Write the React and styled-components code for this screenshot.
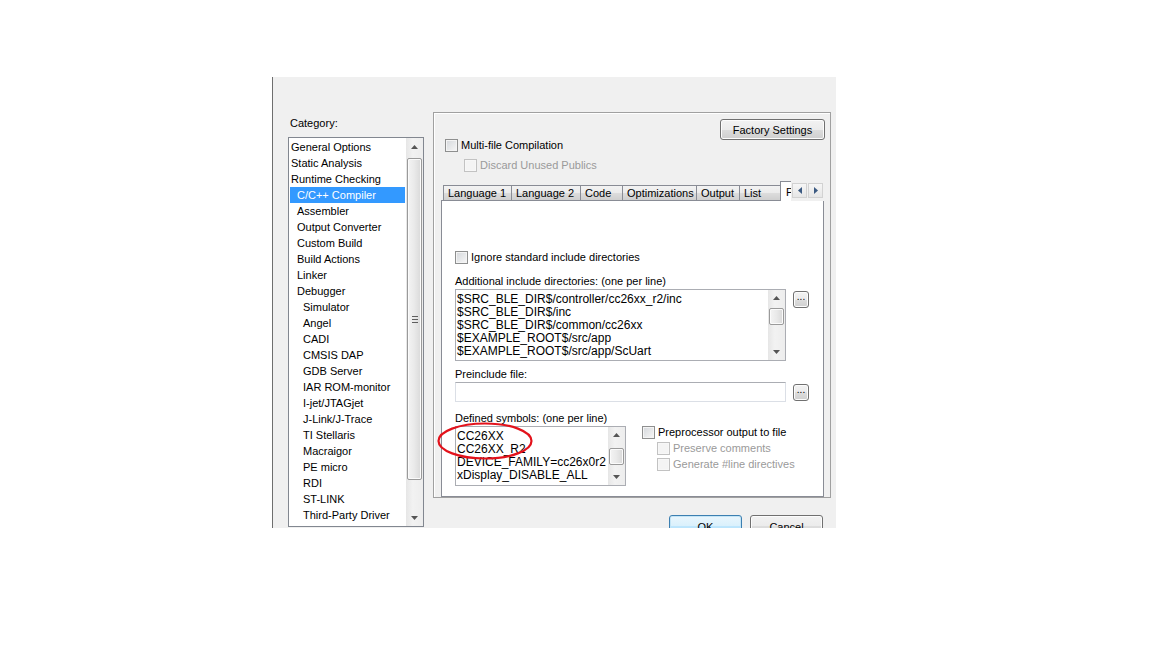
import React from 'react'
import styled, { createGlobalStyle } from 'styled-components'

const GlobalStyle = createGlobalStyle`
  html, body { margin: 0; padding: 0; background: #fff; }
  body {
    font-family: "Liberation Sans", Arial, sans-serif;
    font-size: 11px;
    color: #000;
  }
  * { box-sizing: border-box; }
`

const Page = styled.div`
  width: 1152px;
  height: 648px;
  padding: 77px 0 0 272px;
  background: #fff;
`

const Dialog = styled.div`
  position: relative;
  display: flex;
  width: 564px;
  height: 451px;
  overflow: hidden;
  background: #f0f0f0;
  border-left: 1px solid #6e6e6e;
`

const LeftCol = styled.div`
  display: flex;
  flex-direction: column;
  padding: 39px 0 0 15px;
`

const Label = styled.div`
  height: 14px;
  line-height: 14px;
  white-space: nowrap;
  margin-top: ${p => p.$mt || 0}px;
  padding-left: ${p => p.$pl || 0}px;
  color: ${p => (p.$disabled ? '#9a9a9a' : '#000')};
`

const ListBox = styled.div`
  display: flex;
  width: 136px;
  height: 390px;
  margin-top: 7px;
  background: #fff;
  border: 1px solid #828790;
`

const ListItems = styled.div`
  flex: 1;
  padding: 1px 1px 0 1px;
`

const ListItem = styled.div`
  height: 16px;
  line-height: 16px;
  white-space: nowrap;
  padding-left: ${p => 1 + p.$level * 6}px;
  background: ${p => (p.$selected ? '#3399ff' : 'transparent')};
  color: ${p => (p.$selected ? '#fff' : '#000')};
`

const ScrollTrack = styled.div`
  display: flex;
  flex-direction: column;
  width: 17px;
  flex: none;
  background: linear-gradient(to right, #e6e6e6, #f2f2f2 40%, #ededed);
`

const ArrowBtn = styled.div`
  height: ${p => p.$h}px;
  display: flex;
  align-items: center;
  justify-content: center;
  flex: none;
`

const ThumbArea = styled.div`
  flex: 1;
`

const Thumb = styled.div`
  margin: ${p => p.$top}px 1px 0 1px;
  height: ${p => p.$h}px;
  border: 1px solid #9a9a9a;
  border-radius: 2px;
  background: linear-gradient(to right, #f4f4f4, #e9e9e9 50%, #d9d9d9);
  box-shadow: inset 0 0 0 1px #fbfbfb;
  display: flex;
  align-items: center;
  justify-content: center;
`

const Grip = styled.div`
  width: 6px;
  height: 7px;
  background: repeating-linear-gradient(to bottom, #5e5e5e 0 1px, transparent 1px 3px);
`

function VScroll({ btn, thumbTop, thumbHeight, grip }) {
  return (
    <ScrollTrack>
      <ArrowBtn $h={btn}>
        <svg width="7" height="4" viewBox="0 0 7 4"><path d="M3.5 0 L7 4 L0 4 Z" fill="#555" /></svg>
      </ArrowBtn>
      <ThumbArea>
        <Thumb $top={thumbTop} $h={thumbHeight}>{grip && <Grip />}</Thumb>
      </ThumbArea>
      <ArrowBtn $h={btn}>
        <svg width="7" height="4" viewBox="0 0 7 4"><path d="M0 0 L7 0 L3.5 4 Z" fill="#555" /></svg>
      </ArrowBtn>
    </ScrollTrack>
  )
}

const RightCol = styled.div`
  display: flex;
  flex-direction: column;
  margin-left: 9px;
  padding-top: 35px;
`

const Frame = styled.div`
  display: flex;
  flex-direction: column;
  width: 398px;
  height: 390px;
  border: 1px solid #a0a0a0;
  box-shadow: inset 1px 1px 0 #fff;
`

const TopBar = styled.div`
  display: flex;
  justify-content: flex-end;
  height: 21px;
  margin-top: 6px;
  padding-right: 5px;
`

const Button = styled.div`
  display: flex;
  align-items: center;
  justify-content: center;
  flex: none;
  width: ${p => p.$w}px;
  height: ${p => p.$h}px;
  border: 1px solid ${p => (p.$focus ? '#3c7fb1' : '#707070')};
  border-radius: 3px;
  background: ${p =>
    p.$focus
      ? 'linear-gradient(#eaf6fd 0%, #d9f0fc 50%, #bee6fd 50%, #a7d9f5 100%)'
      : 'linear-gradient(#f2f2f2 0%, #ebebeb 50%, #dddddd 50%, #cfcfcf 100%)'};
  box-shadow: inset 0 0 0 1px ${p => (p.$focus ? '#c4e5f6' : '#fcfcfc')};
  line-height: 14px;
  white-space: nowrap;
`

const DotsButton = styled(Button)`
  align-items: flex-end;
  padding-bottom: 3px;
  margin: ${p => p.$mt}px 0 0 7px;
  font-size: 10px;
`

const CheckRow = styled.div`
  display: flex;
  align-items: center;
  height: 16px;
  margin-top: ${p => p.$mt || 0}px;
  padding-left: ${p => p.$pl || 0}px;
  white-space: nowrap;
  color: ${p => (p.$disabled ? '#9a9a9a' : '#000')};
`

const Box = styled.span`
  width: 13px;
  height: 13px;
  flex: none;
  margin-right: 3px;
  border: 1px solid ${p => (p.$disabled ? '#c2c2c2' : '#8e8f8f')};
  background: ${p =>
    p.$disabled ? '#f4f4f4' : 'linear-gradient(135deg, #d4d7db, #f7f7f7)'};
  box-shadow: inset 0 0 0 1px ${p => (p.$disabled ? '#f7f7f7' : '#f4f4f4')};
`

function Check({ children, ...rest }) {
  return (
    <CheckRow {...rest}>
      <Box $disabled={rest.$disabled} />
      {children}
    </CheckRow>
  )
}

const TabControl = styled.div`
  position: relative;
  width: 383px;
  margin: 8px 0 0 7px;
`

const TabStrip = styled.div`
  position: relative;
  z-index: 1;
  display: flex;
  align-items: flex-end;
  height: 20px;
  padding-left: 2px;
  overflow: hidden;
`

const Tab = styled.div`
  flex: none;
  width: ${p => (p.$w ? `${p.$w + 1}px` : 'auto')};
  height: ${p => (p.$active ? 20 : 16)}px;
  padding: ${p => (p.$active ? '3px 5px 0' : '0 4px')};
  margin-right: -1px;
  line-height: 14px;
  white-space: nowrap;
  overflow: hidden;
  border: 1px solid #898c95;
  border-bottom: ${p => (p.$active ? 'none' : '1px solid #898c95')};
  background: ${p => (p.$active ? '#fff' : 'linear-gradient(#f3f3f3, #ebebeb 50%, #dddddd 50%, #cfcfcf)')};
  position: relative;
  z-index: ${p => (p.$active ? 2 : 0)};
`

const TabArrows = styled.div`
  position: absolute;
  z-index: 3;
  top: 0;
  left: 350px;
  width: 33px;
  height: 20px;
  display: flex;
  gap: 1px;
  padding: 2px 0 0 1px;
  background: #f0f0f0;
`

const ArrowSquare = styled.div`
  width: 15px;
  height: 15px;
  display: flex;
  align-items: center;
  justify-content: center;
  border: 1px solid #d2d2d2;
  background: linear-gradient(#f6f6f6, #e6e6e6);
`

const TabPage = styled.div`
  display: flex;
  flex-direction: column;
  height: 297px;
  margin-top: -1px;
  padding-left: 13px;
  background: #fff;
  border: 1px solid #898c95;
`

const Row = styled.div`
  position: relative;
  display: flex;
  align-items: flex-start;
  margin-top: ${p => p.$mt || 0}px;
`

const TextArea = styled.div`
  display: flex;
  width: ${p => p.$w}px;
  height: ${p => p.$h}px;
  border: 1px solid #abadb3;
  background: #fff;
  font-size: 12px;
`

const Lines = styled.div`
  flex: 1;
  overflow: hidden;
  padding: 3px 0 0 1px;
  line-height: 13px;
  white-space: nowrap;
`

const Input = styled.div`
  width: 331px;
  height: 20px;
  border: 1px solid #dbdfe6;
  border-top-color: #abadb3;
  background: #fff;
`

const Options = styled.div`
  display: flex;
  flex-direction: column;
  margin: -2px 0 0 16px;
`

const Annotation = styled.svg`
  position: absolute;
  left: -18px;
  top: -4px;
  overflow: visible;
`

const ButtonBar = styled.div`
  display: flex;
  justify-content: flex-end;
  gap: 8px;
  margin-top: 17px;
  padding-right: 8px;
`

const categories = [
  ['General Options', 0],
  ['Static Analysis', 0],
  ['Runtime Checking', 0],
  ['C/C++ Compiler', 1],
  ['Assembler', 1],
  ['Output Converter', 1],
  ['Custom Build', 1],
  ['Build Actions', 1],
  ['Linker', 1],
  ['Debugger', 1],
  ['Simulator', 2],
  ['Angel', 2],
  ['CADI', 2],
  ['CMSIS DAP', 2],
  ['GDB Server', 2],
  ['IAR ROM-monitor', 2],
  ['I-jet/JTAGjet', 2],
  ['J-Link/J-Trace', 2],
  ['TI Stellaris', 2],
  ['Macraigor', 2],
  ['PE micro', 2],
  ['RDI', 2],
  ['ST-LINK', 2],
  ['Third-Party Driver', 2],
]

const tabs = [
  ['Language 1', 68],
  ['Language 2', 69],
  ['Code', 42],
  ['Optimizations', 74],
  ['Output', 43],
  ['List', 41],
]

const includeDirs = [
  '$SRC_BLE_DIR$/controller/cc26xx_r2/inc',
  '$SRC_BLE_DIR$/inc',
  '$SRC_BLE_DIR$/common/cc26xx',
  '$EXAMPLE_ROOT$/src/app',
  '$EXAMPLE_ROOT$/src/app/ScUart',
]

const symbols = ['CC26XX', 'CC26XX_R2', 'DEVICE_FAMILY=cc26x0r2', 'xDisplay_DISABLE_ALL']

export default function App() {
  return (
    <Page>
      <GlobalStyle />
      <Dialog>
        <LeftCol>
          <Label $pl={2}>Category:</Label>
          <ListBox>
            <ListItems>
              {categories.map(([name, level]) => (
                <ListItem key={name} $level={level} $selected={name === 'C/C++ Compiler'}>
                  {name}
                </ListItem>
              ))}
            </ListItems>
            <VScroll btn={17} thumbTop={3} thumbHeight={322} grip />
          </ListBox>
        </LeftCol>

        <RightCol>
          <Frame>
            <TopBar>
              <Button $w={105} $h={21}>Factory Settings</Button>
            </TopBar>
            <Check $mt={-3} $pl={11}>Multi-file Compilation</Check>
            <Check $mt={4} $pl={30} $disabled>Discard Unused Publics</Check>

            <TabControl>
              <TabStrip>
                {tabs.map(([t, w]) => (
                  <Tab key={t} $w={w}>{t}</Tab>
                ))}
                <Tab $active>Preprocessor</Tab>
              </TabStrip>
              <TabArrows>
                <ArrowSquare>
                  <svg width="4" height="7" viewBox="0 0 4 7"><path d="M4 0 L0 3.5 L4 7 Z" fill="#3b5a82" /></svg>
                </ArrowSquare>
                <ArrowSquare>
                  <svg width="4" height="7" viewBox="0 0 4 7"><path d="M0 0 L4 3.5 L0 7 Z" fill="#3b5a82" /></svg>
                </ArrowSquare>
              </TabArrows>

              <TabPage>
                <Check $mt={48}>Ignore standard include directories</Check>
                <Label $mt={9}>Additional include directories: (one per line)</Label>
                <Row $mt={1}>
                  <TextArea $w={331} $h={72}>
                    <Lines>
                      {includeDirs.map(d => (
                        <div key={d}>{d}</div>
                      ))}
                    </Lines>
                    <VScroll btn={16} thumbTop={2} thumbHeight={17} />
                  </TextArea>
                  <DotsButton $w={16} $h={17} $mt={2}>...</DotsButton>
                </Row>

                <Label $mt={6}>Preinclude file:</Label>
                <Row $mt={1}>
                  <Input />
                  <DotsButton $w={16} $h={17} $mt={2}>...</DotsButton>
                </Row>

                <Label $mt={9}>Defined symbols: (one per line)</Label>
                <Row $mt={1}>
                  <TextArea $w={171} $h={60}>
                    <Lines>
                      {symbols.map(s => (
                        <div key={s}>{s}</div>
                      ))}
                    </Lines>
                    <VScroll btn={16} thumbTop={5} thumbHeight={17} />
                  </TextArea>
                  <Options>
                    <Check>Preprocessor output to file</Check>
                    <Check $pl={15} $disabled>Preserve comments</Check>
                    <Check $pl={15} $disabled>Generate #line directives</Check>
                  </Options>
                  <Annotation width="96" height="38" viewBox="0 0 96 38">
                    <ellipse cx="48" cy="19" rx="46.5" ry="17.5" fill="none" stroke="#e3121b" strokeWidth="2.2" />
                  </Annotation>
                </Row>
              </TabPage>
            </TabControl>
          </Frame>

          <ButtonBar>
            <Button $w={73} $h={23} $focus>OK</Button>
            <Button $w={73} $h={23}>Cancel</Button>
          </ButtonBar>
        </RightCol>
      </Dialog>
    </Page>
  )
}
